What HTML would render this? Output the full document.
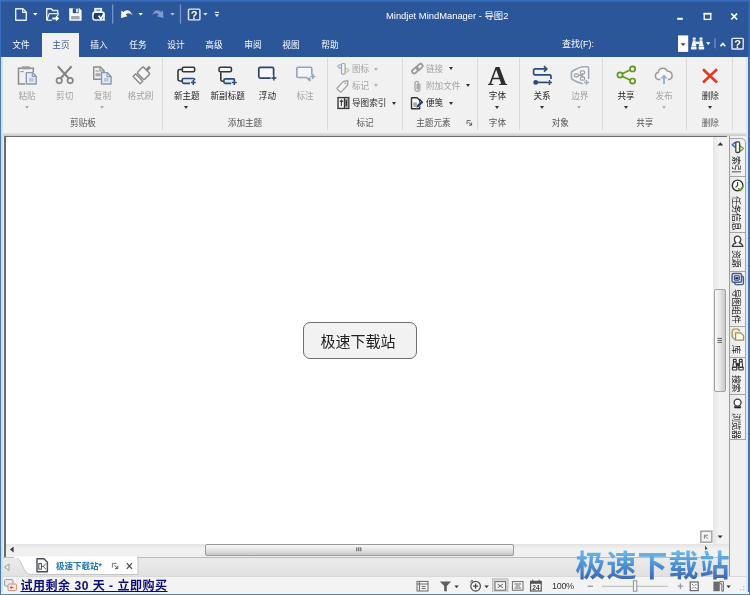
<!DOCTYPE html>
<html>
<head>
<meta charset="utf-8">
<title>Mindjet MindManager - 导图2</title>
<style>
html,body{margin:0;padding:0;}
body{width:750px;height:595px;overflow:hidden;position:relative;background:#f0f0f0;
 font-family:"Liberation Sans","Noto Sans CJK SC",sans-serif;font-size:9px;color:#262626;}
.a{position:absolute;}
svg{position:absolute;overflow:visible;}
/* ---------- title / blue area ---------- */
#blue{left:0;top:0;width:750px;height:57px;background:#2b579a;}
#title{left:386px;top:10px;width:124px;height:12px;line-height:12px;color:#fff;font-size:9.4px;white-space:nowrap;}
.tab{top:39px;height:12px;line-height:12px;width:30px;text-align:center;color:#fff;font-size:8.7px;white-space:nowrap;}
#acttab{left:42px;top:33px;width:37px;height:24px;background:#f1f1f1;}
.qsep{width:1px;background:#7f9bc8;top:5px;height:19px;}
/* ---------- ribbon ---------- */
#ribbon{left:2px;top:57px;width:745px;height:76px;background:#f1f1f1;}
.gsep{top:58px;width:1px;height:72px;background:#d9d9d9;}
.glabel{top:117px;height:12px;line-height:12px;text-align:center;color:#555;font-size:8.6px;white-space:nowrap;}
.blabel{top:90px;height:12px;line-height:12px;text-align:center;font-size:8.6px;white-space:nowrap;width:44px;}
.dis{color:#a3a3a3;}
.slabel{height:12px;line-height:12px;font-size:8.6px;white-space:nowrap;}
.dd{width:0;height:0;border-left:2.5px solid transparent;border-right:2.5px solid transparent;border-top:3px solid #333;}
.dd.g{border-top-color:#b0b0b0;}
.dd.w{border-top-color:#fff;}
/* ---------- canvas ---------- */
#band{left:2px;top:133px;width:745px;height:3px;background:linear-gradient(#e2e2e2,#c9c9c9);}
#canvas{left:4px;top:136px;width:709px;height:408px;background:#fff;border-left:2px solid #6b6b6b;border-top:1px solid #6b6b6b;box-sizing:border-box;}
#node{left:303px;top:322px;width:114px;height:37px;box-sizing:border-box;border:1px solid #6e6e6e;border-radius:7px;background:#f2f2f2;
 text-align:center;line-height:37px;font-size:15px;color:#222;padding-right:4px;}

/* ---------- scrollbars ---------- */
#vscroll{left:713px;top:137px;width:16px;height:407px;background:linear-gradient(90deg,#e6e6e6,#f3f3f3 40%,#f1f1f1);}
#vthumb{left:714px;top:289px;width:11.500px;height:102.500px;box-sizing:border-box;border:1px solid #a2a2a2;border-radius:2px;background:linear-gradient(90deg,#f8f8f8,#e9e9e9 45%,#c8c8c8);}
#hscroll{left:6px;top:544px;width:723px;height:13px;background:linear-gradient(#e4e4e4,#f2f2f2 40%,#efefef);}
#hthumb{left:205px;top:544px;width:308.500px;height:11.500px;box-sizing:border-box;border:1px solid #999;border-radius:2px;background:linear-gradient(#f7f7f7,#e6e6e6 45%,#c9c9c9);}
#vline{left:729px;top:136px;width:1px;height:440px;background:#9a9a9a;}
/* ---------- side panel ---------- */
#side{left:730px;top:136px;width:17px;height:440px;background:#f0f0f0;}
.stab{left:730px;width:15.500px;box-sizing:border-box;border:1px solid #a4a4a4;border-left:none;background:linear-gradient(90deg,#e9e9e9,#f4f4f4);}
.stxt{left:728.500px;width:13px;writing-mode:vertical-rl;text-orientation:sideways;font-size:9px;font-weight:400;line-height:13px;color:#1a1a1a;white-space:nowrap;letter-spacing:-.45px;}
/* ---------- bottom ---------- */
#tabbar{left:2px;top:557px;width:727px;height:19px;background:linear-gradient(#ebebeb,#e1e1e1);border-top:1px solid #bdbdbd;box-sizing:border-box;}
#status{left:2px;top:576px;width:745px;height:17px;background:#f3f3f3;border-top:1px solid #d9d9d9;box-sizing:border-box;}
#trial{left:20.500px;top:578.500px;height:15px;line-height:15px;font-weight:bold;font-size:12px;letter-spacing:.52px;color:#0b0b78;text-decoration:underline;white-space:nowrap;}
#doctab{left:56px;top:560px;height:13px;line-height:13px;font-weight:bold;font-size:8.5px;color:#2473b4;white-space:nowrap;}
#zoomtxt{left:552px;top:580px;height:12px;line-height:12px;font-size:9px;color:#333;letter-spacing:-.3px;}
#wm{left:575.500px;top:546px;height:40px;line-height:40px;font-size:30px;font-weight:bold;white-space:nowrap;letter-spacing:1px;
 font-family:"Liberation Sans","Noto Sans CJK SC",sans-serif;
 background:linear-gradient(#66b3e4 18%,#4a8cd2 52%,#3b63b3 86%);-webkit-background-clip:text;background-clip:text;color:transparent;-webkit-text-fill-color:transparent;}
/* window frame */
.frame{background:#2b579a;}
</style>
</head>
<body>
<div id="root" style="position:absolute;left:0;top:0;width:750px;height:595px;will-change:transform">
<!-- ===== blue title area ===== -->
<div id="blue" class="a"></div>
<div id="acttab" class="a"></div>
<div id="title" class="a">Mindjet MindManager - 导图2</div>

<div class="a tab" style="left:6px">文件</div>
<div class="a tab" style="left:46px;color:#35578f">主页</div>
<div class="a tab" style="left:84px">插入</div>
<div class="a tab" style="left:123px">任务</div>
<div class="a tab" style="left:161px">设计</div>
<div class="a tab" style="left:199px">高级</div>
<div class="a tab" style="left:238px">审阅</div>
<div class="a tab" style="left:276px">视图</div>
<div class="a tab" style="left:315px">帮助</div>


<!-- QAT icons -->
<svg class="a" style="left:0;top:0" width="750" height="57" viewBox="0 0 750 57">
 <!-- window frame hints -->
 <rect x="0" y="0" width="750" height="1.500" fill="#3a6fc0"/>
 <rect x="0" y="0" width="1" height="57" fill="#3a6fc0"/>
 <rect x="748.600" y="0" width="1.400" height="57" fill="#3a6fc0"/>
 <!-- new doc -->
 <path d="M15.7 8.8h7.2l3.4 3.4v8H15.7z" fill="none" stroke="#e3ebf7" stroke-width="1.4" stroke-linejoin="round"/>
 <path d="M22.6 8.8v3.6h3.7" fill="none" stroke="#e3ebf7" stroke-width="1.2"/>
 <path d="M33 13h4.6l-2.3 2.6z" fill="#fff"/>
 <!-- open folder -->
 <path d="M46.7 20.2V8.8h4.6l1.4 1.7h5v3" fill="none" stroke="#e3ebf7" stroke-width="1.4" stroke-linejoin="round"/>
 <path d="M46.8 20.2l2.4-6.6h9.2l-1.2 3" fill="none" stroke="#e3ebf7" stroke-width="1.3" stroke-linejoin="round"/>
 <path d="M46.8 20.3h5" stroke="#e3ebf7" stroke-width="1.3"/>
 <path d="M52.3 17.4h3.6v-1.9l3.4 2.9-3.4 2.9v-1.9h-3.6z" fill="#fff"/>
 <!-- save -->
 <path d="M69.2 8.3h10.2l2.2 2.2v10.3H69.2z" fill="#f4f7fc"/>
 <rect x="72.8" y="8.3" width="5.8" height="4.8" fill="#2b4f8e"/>
 <rect x="76" y="9" width="1.9" height="3.4" fill="#e9eef8"/>
 <rect x="71.2" y="16" width="8.4" height="3.3" fill="#a3a6ab"/>
 <!-- print preview -->
 <rect x="94.800" y="8.400" width="6.800" height="4" fill="#dfe7f3" stroke="#eef3fa" stroke-width="1"/>
 <path d="M96.400 10.200h3.600" stroke="#6f8a86" stroke-width="1.200"/>
 <rect x="93" y="12.200" width="11" height="7.800" rx="2.200" fill="#223f73" stroke="#eef3fa" stroke-width="1.700"/>
 <path d="M94.600 15.400v3" stroke="#17305c" stroke-width="1.600"/>
 <path d="M98.600 15.600l2.200 3.400 3.400-5.600" fill="none" stroke="#fff" stroke-width="1.700"/>
 <rect x="103.400" y="19.200" width="1.500" height="1.500" fill="#eef3fa"/>
 <!-- sep -->
 <rect x="112" y="4.6" width="1.3" height="19" fill="#7593c6"/>
 <!-- undo -->
 <path d="M121 17.900L121.400 10.500L123.300 12.100C125.600 9.300 130.400 8.800 132.500 15.600C130.500 12.900 127.800 12.700 125.700 14.400L127.500 16.200Z" fill="#fff"/>
 <path d="M138.300 13h4.600l-2.300 2.600z" fill="#fff"/>
 <!-- redo (dim) -->
 <path d="M163.400 17.900L163 10.500L161.100 12.100C158.800 9.300 154 8.800 151.900 15.600C153.900 12.900 156.600 12.700 158.700 14.400L156.900 16.200Z" fill="#7d9bcd"/>
 <path d="M170.200 13h4.600l-2.300 2.600z" fill="#b3c4e2"/>
 <!-- sep -->
 <rect x="179.800" y="4.600" width="1.300" height="19" fill="#7593c6"/>
 <!-- help -->
 <rect x="188.500" y="9.100" width="11.400" height="10.800" rx="1" fill="#264b87" stroke="#e3ebf7" stroke-width="1.400"/>
 <text x="194.200" y="18.500" text-anchor="middle" font-family="Liberation Sans, sans-serif" font-weight="bold" font-size="11" fill="#fff">?</text>
 <path d="M203.200 13h4.400l-2.200 2.600z" fill="#dfe7f5"/>
 <!-- customize -->
 <rect x="214.800" y="11.800" width="4.200" height="1.200" fill="#dfe7f5"/>
 <path d="M214.600 14.200h4.600l-2.300 2.800z" fill="#dfe7f5"/>

 <!-- window controls -->
 <rect x="677.200" y="17.800" width="5.600" height="2" fill="#fff"/>
 <rect x="704.200" y="13.800" width="6.600" height="5.600" fill="none" stroke="#fff" stroke-width="1.300"/>
 <rect x="703.600" y="12.800" width="7.800" height="1.600" fill="#fff"/>
 <path d="M731.300 13.500l5.800 6M737.100 13.500l-5.800 6" stroke="#fff" stroke-width="1.700" fill="none"/>

 <!-- search row -->
 <rect x="678" y="35.400" width="10.200" height="16.500" fill="#fff"/>
 <path d="M680.600 43.200h5l-2.500 2.900z" fill="#444"/>
 <!-- binoculars -->
 <g fill="#f1f5fb">
  <rect x="692.600" y="37.400" width="3.200" height="2.400" rx=".8"/>
  <rect x="699.400" y="37.400" width="3.200" height="2.400" rx=".8"/>
  <path d="M692.900 40.200h2.600l.9 6.200h-5z"/>
  <path d="M699.700 40.200h2.600l1.400 6.200h-5z"/>
  <rect x="695.800" y="41.600" width="3.600" height="2.400"/>
  <rect x="691" y="46.800" width="5.600" height="2.800" rx=".8"/>
  <rect x="698.600" y="46.800" width="5.600" height="2.800" rx=".8"/>
 </g>
 <path d="M706 42.300h4.400l-2.200 2.700z" fill="#fff"/>
 <rect x="714.400" y="38.300" width="1.200" height="10" fill="#7593c6"/>
 <path d="M720.500 46.200l2.400-2.700 2.400 2.700" fill="none" stroke="#fff" stroke-width="1.700"/>
 <rect x="732" y="38.400" width="11.200" height="10.600" rx=".8" fill="#264b87" stroke="#e3ebf7" stroke-width="1.400"/>
 <text x="737.600" y="47.800" text-anchor="middle" font-family="Liberation Sans, sans-serif" font-weight="bold" font-size="11" fill="#fff">?</text>
</svg>
<div class="a" style="left:562px;top:38px;height:12px;line-height:12px;color:#fff;font-size:9px;white-space:nowrap">查找(F):</div>

<!-- ===== ribbon ===== -->
<div id="ribbon" class="a"></div>
<div class="a gsep" style="left:162px"></div>
<div class="a gsep" style="left:327px"></div>
<div class="a gsep" style="left:402px"></div>
<div class="a gsep" style="left:477px"></div>
<div class="a gsep" style="left:519px"></div>
<div class="a gsep" style="left:602px"></div>
<div class="a gsep" style="left:686px"></div>
<div class="a gsep" style="left:732px"></div>
<div class="a blabel dis" style="left:5.0px">粘贴</div>
<div class="a dd g" style="left:24.5px;top:105.5px"></div>
<div class="a blabel dis" style="left:42.7px">剪切</div>
<div class="a blabel dis" style="left:80.5px">复制</div>
<div class="a dd g" style="left:100.0px;top:105.5px"></div>
<div class="a blabel dis" style="left:118.5px">格式刷</div>
<div class="a glabel" style="left:53.0px;width:60px">剪贴板</div>
<div class="a blabel" style="left:164.8px">新主题</div>
<div class="a dd" style="left:184.3px;top:105.5px"></div>
<div class="a blabel" style="left:205.7px">新副标题</div>
<div class="a blabel" style="left:245.4px">浮动</div>
<div class="a blabel dis" style="left:283.0px">标注</div>
<div class="a glabel" style="left:215.0px;width:60px">添加主题</div>
<div class="a slabel dis" style="left:352.0px;top:63.0px">图标</div>
<div class="a dd g" style="left:374.3px;top:67.5px"></div>
<div class="a slabel dis" style="left:352.0px;top:79.8px">标记</div>
<div class="a dd g" style="left:374.3px;top:84.3px"></div>
<div class="a slabel" style="left:352.0px;top:97.0px">导图索引</div>
<div class="a dd" style="left:391.5px;top:101.5px"></div>
<div class="a glabel" style="left:335.0px;width:60px">标记</div>
<div class="a slabel dis" style="left:426.0px;top:62.8px">链接</div>
<div class="a dd" style="left:449.0px;top:67.3px"></div>
<div class="a slabel dis" style="left:426.0px;top:79.6px">附加文件</div>
<div class="a dd" style="left:466.0px;top:84.1px"></div>
<div class="a slabel" style="left:426.0px;top:97.0px">便笺</div>
<div class="a dd" style="left:449.0px;top:101.5px"></div>
<div class="a glabel" style="left:403.4px;width:60px">主题元素</div>
<div class="a blabel" style="left:475.4px">字体</div>
<div class="a dd" style="left:494.9px;top:105.5px"></div>
<div class="a glabel" style="left:467.4px;width:60px">字体</div>
<div class="a" style="left:480px;top:59.500px;width:35px;height:32px;line-height:32px;text-align:center;font-family:'Liberation Serif',serif;font-weight:bold;font-size:27px;color:#2e2e2e">A</div>
<div class="a blabel" style="left:520.0px">关系</div>
<div class="a dd" style="left:539.5px;top:105.5px"></div>
<div class="a blabel dis" style="left:557.8px">边界</div>
<div class="a dd g" style="left:577.3px;top:105.5px"></div>
<div class="a glabel" style="left:530.3px;width:60px">对象</div>
<div class="a blabel" style="left:604.0px">共享</div>
<div class="a dd" style="left:623.5px;top:105.5px"></div>
<div class="a blabel dis" style="left:642.0px">发布</div>
<div class="a dd g" style="left:661.5px;top:105.5px"></div>
<div class="a glabel" style="left:614.8px;width:60px">共享</div>
<div class="a blabel" style="left:688.3px">删除</div>
<div class="a dd" style="left:707.8px;top:105.5px"></div>
<div class="a glabel" style="left:680.3px;width:60px">删除</div>

<svg class="a" style="left:0;top:0" width="750" height="136" viewBox="0 0 750 136">
 <!-- paste -->
 <g>
  <path d="M25 84H18.500V68.300H33.300V72" fill="none" stroke="#8c8c8c" stroke-width="1.500"/>
  <rect x="21.800" y="66.300" width="8" height="3" fill="#9a9a9a"/>
  <rect x="20.300" y="71" width="3.400" height="1.200" fill="#9a9a9a"/>
  <path d="M26.300 72.600h6.300l3.600 3.600v7.800H26.300z" fill="#e4ecf8" stroke="#8b98b0" stroke-width="1.400" stroke-linejoin="round"/>
  <path d="M32.300 72.800v3.600h3.700" fill="none" stroke="#8b98b0" stroke-width="1.100"/>
  <rect x="29" y="78" width="4.600" height="3.600" fill="#b9c7de"/>
 </g>
 <!-- cut -->
 <g fill="none" stroke="#858585" stroke-width="1.700">
  <path d="M57.800 66.200L68.600 78.200M71.600 66.200L60.800 78.200" stroke-width="2.100"/>
  <circle cx="59.200" cy="80.600" r="2.700"/>
  <circle cx="70.200" cy="80.600" r="2.700"/>
 </g>
 <!-- copy -->
 <g>
  <path d="M93.700 67h6.600l3.800 3.800v8.400H93.700z" fill="#ededed" stroke="#8c8c8c" stroke-width="1.400" stroke-linejoin="round"/>
  <path d="M100 67.200v3.800h3.900" fill="none" stroke="#8c8c8c" stroke-width="1.100"/>
  <rect x="95.600" y="70.400" width="3" height="1.200" fill="#999"/>
  <rect x="95.600" y="73.200" width="5" height="3" fill="#a9a9a9"/>
  <path d="M101.500 72.600h5.800l3.800 3.800v7.600H101.500z" fill="#e4ecf8" stroke="#8b98b0" stroke-width="1.400" stroke-linejoin="round"/>
  <path d="M107 72.800v3.800h3.900" fill="none" stroke="#8b98b0" stroke-width="1.100"/>
  <rect x="104" y="78" width="4.600" height="3.600" fill="#b9c7de"/>
 </g>
 <!-- format painter -->
 <g transform="translate(1.300 -0.500) rotate(45 141 75)">
  <rect x="139.600" y="64.200" width="2.800" height="5" fill="#858585"/>
  <rect x="136" y="69" width="10" height="8.600" rx="1.200" fill="#f6f6f6" stroke="#8a8a8a" stroke-width="1.500"/>
  <path d="M136 79.400h10v3.600h-10z" fill="#f6f6f6" stroke="#8a8a8a" stroke-width="1.400"/>
 </g>
 <!-- new topic -->
 <g fill="none">
  <path d="M182 69.500h-2.200a1.800 1.800 0 0 0-1.800 1.800v7.900a1.800 1.800 0 0 0 1.800 1.800h2.200" stroke="#363636" stroke-width="1.600"/>
  <rect x="182.300" y="67.300" width="12.300" height="4.400" rx="1.300" fill="#f7f7f7" stroke="#363636" stroke-width="1.600"/>
  <path d="M194.600 80.300v-.500a1.300 1.300 0 0 0-1.300-1.300h-9.700a1.300 1.300 0 0 0-1.300 1.300v2.300a1.300 1.300 0 0 0 1.300 1.300h6.400" fill="#dfeaf8" stroke="#2b4a80" stroke-width="1.600"/>
  <path d="M190.900 82.500h4.800M193.300 80.100v4.800" stroke="#2b4a80" stroke-width="1.500"/>
 </g>
 <!-- new subtopic -->
 <g fill="none">
  <rect x="219.100" y="67.300" width="12.300" height="4.400" rx="1.300" fill="#f7f7f7" stroke="#363636" stroke-width="1.600"/>
  <path d="M220.800 72.200v7.200a1.800 1.800 0 0 0 1.800 1.800h1.400" stroke="#363636" stroke-width="1.600"/>
  <path d="M234.600 80.400v-.200a1.300 1.300 0 0 0-1.300-1.300h-8.100a1.300 1.300 0 0 0-1.300 1.300v1.900a1.300 1.300 0 0 0 1.300 1.300h6" fill="#dfeaf8" stroke="#2b4a80" stroke-width="1.600"/>
  <path d="M231.900 82.500h4.800M234.300 80.100v4.800" stroke="#2b4a80" stroke-width="1.500"/>
 </g>
 <!-- floating -->
 <g fill="none">
  <path d="M273.600 75.600V68.800a1.500 1.500 0 0 0-1.500-1.500h-11.800a1.500 1.500 0 0 0-1.500 1.500v7.800a1.500 1.500 0 0 0 1.500 1.500h10.300" fill="#f5f7fb" stroke="#2f436e" stroke-width="1.700"/>
  <path d="M271.400 78h5M273.900 75.500v5" stroke="#2f436e" stroke-width="1.500"/>
 </g>
 <!-- callout -->
 <g fill="none">
  <path d="M311.800 74.800V68.600a1.300 1.300 0 0 0-1.300-1.300h-12.400a1.300 1.300 0 0 0-1.300 1.300v7.600a1.300 1.300 0 0 0 1.300 1.300h8.400l3.400 3.200-.4-3.200" fill="#f3f5f9" stroke="#93a2bd" stroke-width="1.600" stroke-linejoin="round"/>
  <path d="M310.300 76.600h5M312.800 74.100v5" stroke="#93a2bd" stroke-width="1.500"/>
 </g>
 <!-- icon marker (disabled) -->
 <g fill="#f6f6f6" stroke-width="1.200">
  <path d="M337.700 66.500l1.900-1.700h2.400v3.400h-2.400z" stroke="#a4b2cf" fill="#e6ecf8" stroke-linejoin="round"/>
  <path d="M349 70.300l-1.900 1.700h-2.400v-3.400h2.400z" stroke="#b3cc9a" fill="#eef6e3" stroke-linejoin="round"/>
  <rect x="341.500" y="63.500" width="3.600" height="10.600" rx="1.200" stroke="#a0a4a0"/>
 </g>
 <!-- tag (disabled) -->
 <g transform="translate(0 -0.600) rotate(-47 343.500 86)">
  <path d="M337.600 83.200h8.800l3.400 2.800-3.400 2.800h-8.800a1 1 0 0 1-1-1v-3.600a1 1 0 0 1 1-1z" fill="#f6f6f6" stroke="#a3a3a3" stroke-width="1.400" stroke-linejoin="round"/>
  <circle cx="346.200" cy="86" r=".9" fill="#a3a3a3"/>
 </g>
 <!-- map index -->
 <g>
  <rect x="338" y="97.600" width="10.800" height="10.800" fill="#fbfbfb" stroke="#3a3a3a" stroke-width="1.400"/>
  <rect x="344.600" y="98.400" width="3.600" height="9.400" fill="#9a9a9a"/>
  <path d="M341.400 100.400v5.600M339.800 101.800l1.600-1.800 1.600 1.800" fill="none" stroke="#3a3a3a" stroke-width="1.100"/>
  <path d="M344.400 98v10" stroke="#3a3a3a" stroke-width="1.200"/>
  <rect x="345.600" y="100.200" width="1.400" height="5.800" fill="#3a3a3a"/>
 </g>
 <!-- link (disabled) -->
 <g transform="rotate(-40 417.200 68.800)" fill="none" stroke="#9c9c9c" stroke-width="1.800">
  <rect x="411.200" y="66.700" width="7" height="4.200" rx="2.100"/>
  <rect x="416.600" y="66.700" width="7" height="4.200" rx="2.100"/>
 </g>
 <!-- paperclip (disabled) -->
 <g fill="none" stroke="#a8a8a8" stroke-width="1.300">
  <path d="M419.800 83.600v5.400a2.400 2.400 0 0 1-4.800 0v-6a1.700 1.700 0 0 1 3.400 0v5.600a.6.600 0 0 1-1.200 0v-4.800"/>
 </g>
 <!-- notes -->
 <g>
  <path d="M411.500 97.700h5.600l2.600 2.600v8.400h-8.200z" fill="#fbfbfb" stroke="#333" stroke-width="1.400" stroke-linejoin="round"/>
  <rect x="413.300" y="102.400" width="3.600" height="4.400" fill="#a9a9a9"/>
  <path d="M416 108l.6-2.600 4.300-4.500 2 1.900-4.300 4.500z" fill="#24427f" stroke="#f4f4f4" stroke-width=".5"/>
  <path d="M419.600 99.200l3.300 3.600" stroke="#222" stroke-width="1.200"/>
 </g>
 <!-- launcher -->
 <path d="M470.600 120.600h-3.600v3.600" fill="none" stroke="#666" stroke-width="1"/>
 <path d="M468.600 122.200l2.600 2.600M471.600 122.600v2.600h-2.600" fill="none" stroke="#555" stroke-width="1"/>
 <!-- relationship -->
 <g fill="none" stroke="#2c4a80" stroke-width="1.700">
  <path d="M545.600 68.900h-10.600a1.400 1.400 0 0 0-1.400 1.400v3.200a1.400 1.400 0 0 0 1.400 1.400h14.600a1.400 1.400 0 0 1 1.400 1.400v2.800"/>
  <path d="M544 66.200l2.800 2.700-2.800 2.700"/>
  <path d="M536 82.400h11"/>
  <path d="M547 82.400h5M549.500 79.900v5" stroke-width="1.500"/>
  <circle cx="535.700" cy="82.400" r="1.600" fill="#2c4a80"/>
 </g>
 <!-- boundary (disabled) -->
 <g fill="none">
  <path d="M588.600 79V68.200a1.400 1.400 0 0 0-1.400-1.400h-3.200c-3 0-8.200 2.400-11.600 4.400a2 2 0 0 0-1 1.700v4.900a2 2 0 0 0 1 1.700c3 1.800 7.400 3.700 10.600 4.200" stroke="#9ea9bd" stroke-width="1.600" fill="#f3f5f9"/>
  <path d="M582.300 72.400v6.300M578.600 75.300h3.200" stroke="#a2a2a2" stroke-width="1.600"/>
  <g fill="#fafafa" stroke="#a2a2a2" stroke-width="1.300">
   <rect x="574.400" y="73.800" width="4" height="3" rx="1.200"/>
   <rect x="580.400" y="70.800" width="4.200" height="3.200" rx="1.200"/>
   <rect x="580.400" y="77" width="4.200" height="3.200" rx="1.200"/>
  </g>
  <path d="M584.100 82.400h4.800M586.500 80v4.800" stroke="#9ea9c2" stroke-width="1.500"/>
 </g>
 <!-- share -->
 <g fill="none" stroke="#5d9b20" stroke-width="1.700">
  <path d="M622.200 73.800l7.800-3.800M622.200 76.200l7.800 3.800"/>
  <circle cx="620" cy="75" r="2.600" fill="#f6f9f0"/>
  <circle cx="632.600" cy="68.900" r="2.600" fill="#f6f9f0"/>
  <circle cx="632.600" cy="81.100" r="2.600" fill="#f6f9f0"/>
 </g>
 <!-- publish (disabled) -->
 <g fill="none">
  <path d="M660.400 79.600h-1.600a3.600 3.600 0 0 1-.6-7.100 4.800 4.800 0 0 1 9.200-1.300 4.300 4.300 0 0 1 1.600 8.400h-1.200" stroke="#9c9c9c" stroke-width="1.500" fill="#f6f6f6"/>
  <path d="M664 84v-7" stroke="#8fb0da" stroke-width="1.900"/>
  <path d="M660.400 78.600l3.600-4 3.600 4z" fill="#8fb0da"/>
 </g>
 <!-- delete -->
 <path d="M703 69.200l14 13.400M717 69.200l-14 13.400" stroke="#e03d20" stroke-width="2.700" fill="none"/>
</svg>


<!-- ===== canvas ===== -->
<div id="band" class="a"></div>
<div id="canvas" class="a"></div>
<div id="node" class="a">极速下载站</div>


<!-- ===== scrollbars ===== -->
<div id="vscroll" class="a"></div>
<div id="vthumb" class="a"></div>
<div class="a" style="left:713px;top:136px;width:14px;height:1px;background:#6b6b6b"></div>
<div id="hscroll" class="a"></div>
<div id="hthumb" class="a"></div>
<div class="a" style="left:4px;top:544px;width:2px;height:13px;background:#6b6b6b"></div>
<div id="side" class="a"></div>
<div id="vline" class="a"></div>

<!-- side tabs -->
<div class="a stab" style="top:138px;height:39px;border-top-right-radius:5px"></div>
<div class="a stab" style="top:176px;height:57px"></div>
<div class="a stab" style="top:232px;height:40px"></div>
<div class="a stab" style="top:271px;height:56px"></div>
<div class="a stab" style="top:326px;height:32px"></div>
<div class="a stab" style="top:357px;height:38px"></div>
<div class="a stab" style="top:394px;height:46px"></div>
<div class="a stxt" style="top:156px">索引</div>
<div class="a stxt" style="top:195.500px">任务信息</div>
<div class="a stxt" style="top:250px">资源</div>
<div class="a stxt" style="top:289px">导图组件</div>
<div class="a stxt" style="top:345px">库</div>
<div class="a stxt" style="top:375px">搜索</div>
<div class="a stxt" style="top:412.500px">浏览器</div>

<svg class="a" style="left:725px;top:136px" width="25" height="310" viewBox="725 136 25 310">
 <!-- index -->
 <path d="M732.200 144.800l2.800-2.400h2.200v4.800h-2.200z" fill="#cfdcf5" stroke="#3f5fae" stroke-width="1.300" stroke-linejoin="round"/>
 <path d="M743.500 148.600l-2.800 2.400h-2.200v-4.800h2.200z" fill="#dcefc2" stroke="#6aa324" stroke-width="1.300" stroke-linejoin="round"/>
 <rect x="735.800" y="141.900" width="3.800" height="10.600" rx="1.200" fill="#fbfbfb" stroke="#36463a" stroke-width="1.300"/>
 <!-- clock -->
 <circle cx="737.600" cy="185.400" r="5.300" fill="#fcfcfc" stroke="#333" stroke-width="1.400"/>
 <path d="M737.600 182v3.600l-2 1.600" fill="none" stroke="#333" stroke-width="1.100"/>
 <path d="M738.400 188.400l1.800 2 2.800-4" fill="none" stroke="#5ba11c" stroke-width="1.700"/>
 <!-- person -->
 <path d="M732.400 246.400c0-2 2-3 3.600-3.600-1.200-1-1.600-2-1.600-3.400a3.200 3.200 0 0 1 6.400 0c0 1.400-.4 2.400-1.600 3.400 1.600.6 3.600 1.600 3.600 3.600z" fill="#fcfcfc" stroke="#3c3c3c" stroke-width="1.300" stroke-linejoin="round"/>
 <!-- map parts -->
 <rect x="734.800" y="276.200" width="8.600" height="8.400" rx="1.400" fill="#eef2fa" stroke="#44588a" stroke-width="1.400"/>
 <rect x="732.100" y="273.500" width="9.400" height="8.800" rx="1.400" fill="#eef2fa" stroke="#44588a" stroke-width="1.400"/>
 <rect x="734.300" y="275.700" width="5" height="4.400" rx=".6" fill="#d5deef" stroke="#344672" stroke-width="1.100"/>
 <rect x="735.300" y="277.200" width="3" height="1.800" fill="#1c2745"/>
 <!-- library -->
 <path d="M732.200 337v-6.400l1.600-1.600h4l2 2" fill="#f3ead0" stroke="#a48c5e" stroke-width="1.200" stroke-linejoin="round"/>
 <path d="M735.600 340.200v-7.400h5l3 2.800v4.600z" fill="#fbf7e6" stroke="#a48c5e" stroke-width="1.200" stroke-linejoin="round"/>
 <path d="M732.200 337l3.400 3.200" stroke="#a48c5e" stroke-width="1.100"/>
 <!-- binoculars -->
 <g fill="#fcfcfc" stroke="#333" stroke-width="1.100">
  <path d="M733.600 361.800h2.400l.8 5.600h-4z"/>
  <path d="M739.600 361.800h2.400l.8 5.600h-4z"/>
  <rect x="732.400" y="367.400" width="4.400" height="2.600" rx=".6"/>
  <rect x="738.800" y="367.400" width="4.400" height="2.600" rx=".6"/>
  <rect x="733.400" y="359.400" width="2.800" height="2.400" rx=".6"/>
  <rect x="739.400" y="359.400" width="2.800" height="2.400" rx=".6"/>
  <path d="M736.400 363.600h2.800v2.200h-2.800z" fill="#333"/>
 </g>
 <!-- browser -->
 <circle cx="737.600" cy="402.600" r="3.500" fill="#fcfcfc" stroke="#3a3a3a" stroke-width="1.300"/>
 <path d="M734.400 407.400h6.400" stroke="#222" stroke-width="1.800"/>
 <path d="M735.400 405.800l-1 1.400M739.800 405.800l1 1.400" stroke="#222" stroke-width="1"/>
</svg>


<!-- ===== bottom tab bar / status ===== -->
<div id="tabbar" class="a"></div>
<div id="status" class="a"></div>
<svg class="a" style="left:0;top:540px" width="750" height="55" viewBox="0 540 750 55">
 <!-- document tab -->
 <path d="M14 557.500c5 0 6 3 8.500 8.500s4.500 8.500 9 8.500H138v-15.500a1.500 1.500 0 0 0-1.500-1.500z" fill="#fff" stroke="#c4c4c4" stroke-width="1"/>
 <rect x="14" y="556.400" width="123" height="1.800" fill="#fff"/>
 <!-- nav arrows -->
 <path d="M9 564l-4.400 3.200 4.400 3.200z" fill="#f4f4f4" stroke="#9a9a9a" stroke-width="1"/>
 <path d="M13.600 546.600v6l-3.600-3z" fill="#3b3b3b"/>
 <!-- map doc icon -->
 <path d="M37 558.800h7l3.400 3.400v9.600H37z" fill="#fff" stroke="#444c5e" stroke-width="1.400" stroke-linejoin="round"/>
 <rect x="38.800" y="563.600" width="2.600" height="5.600" fill="none" stroke="#444c5e" stroke-width="1"/>
 <path d="M41.600 566.400h1.800M46 563.400l-2.600 3 2.600 3" fill="none" stroke="#444c5e" stroke-width="1"/>
 <!-- restore + close in tab -->
 <path d="M116.600 563.400h-4.200v4.200" fill="none" stroke="#777" stroke-width="1"/>
 <path d="M114.600 565.400l2.800 2.800M117.800 565.800v2.800H115" fill="none" stroke="#555" stroke-width="1"/>
 <path d="M126.800 563.200l5.200 5.600M132 563.200l-5.200 5.600" stroke="#444" stroke-width="1.200" fill="none"/>
 <!-- trial icon -->
 <rect x="4.600" y="579.600" width="8.400" height="6.600" rx="1" fill="#e6edf7" stroke="#8d99b4" stroke-width="1"/>
 <rect x="8" y="584" width="8.400" height="6.600" rx="1" fill="#fbe9e2" stroke="#d98b73" stroke-width="1"/>
 <path d="M13.600 587.400h-3.400m1.400-1.400l-1.400 1.400 1.400 1.400" fill="none" stroke="#c8502d" stroke-width="1"/>
 <!-- canvas corner buttons -->
 <rect x="700.800" y="531.200" width="11" height="11" fill="#f2f2f2" stroke="#a8a8a8" stroke-width="1.600"/>
 <path d="M704.400 538.800v-3.600h3.600M704.800 535.600l3.200 3.200" fill="none" stroke="#777" stroke-width=".9"/>
 <path d="M717.600 535.400h5l-2.500 2.800z" fill="#333"/>
 <path d="M705 545.600l2.600 3.400-1.400.2-.8 1.200z" fill="#2a2a2a"/>
 <!-- status icons -->
 <g fill="none" stroke="#6a6a6a" stroke-width="1">
  <rect x="417" y="581.400" width="11" height="9.600" fill="#f8f8f8"/>
  <path d="M419.400 581.400v9.600M417 584h11M421.600 586.400h4M421.600 588.600h4"/>
 </g>
 <path d="M440 581.400h11l-4.200 4.600v5.200h-2.600v-5.200z" fill="#5d5d5d"/>
 <path d="M454.400 585.600h4.400l-2.200 2.500z" fill="#333"/>
 <circle cx="475.600" cy="586.200" r="4.800" fill="#fafafa" stroke="#555" stroke-width="1.300"/>
 <path d="M473 586.200h5.200M475.600 583.600v5.200" stroke="#444" stroke-width="1.300"/>
 <path d="M470.400 582.400l1.600-2.200 1.600 2" fill="none" stroke="#555" stroke-width="1"/>
 <path d="M484.400 585.600h4.400l-2.200 2.500z" fill="#333"/>
 <rect x="492.500" y="578.800" width="15.500" height="13.600" fill="#d6d6d6" stroke="#bdbdbd" stroke-width="1"/>
 <g fill="none" stroke="#6a6a6a" stroke-width="1">
  <rect x="495" y="581.600" width="10.600" height="8.600" fill="#f4f4f4"/>
  <path d="M497.600 584l5.400 3.800M503 584l-5.400 3.800"/>
  <rect x="512.400" y="581.600" width="10.600" height="8.600" fill="#f8f8f8"/>
  <path d="M514.400 584h6.600M515.600 586h4.200M514.400 588h6.600"/>
 </g>
 <rect x="530.600" y="581.400" width="10.600" height="9.600" fill="#fafafa" stroke="#555" stroke-width="1.200"/>
 <rect x="530.600" y="581.400" width="10.600" height="2.400" fill="#555"/>
 <path d="M532.600 579.800v2M539.200 579.800v2" stroke="#555" stroke-width="1.200"/>
 <text x="535.900" y="590" text-anchor="middle" font-family="Liberation Sans, sans-serif" font-weight="bold" font-size="6.500" fill="#444">24</text>
 <!-- zoom slider -->
 <rect x="587.600" y="585.600" width="5.400" height="1.300" fill="#9a9a9a"/>
 <rect x="601.800" y="585.800" width="66" height="1" fill="#b9b9b9"/>
 <rect x="633.400" y="580.800" width="3.400" height="10.400" fill="#f4f4f4" stroke="#8f8f8f" stroke-width="1"/>
 <path d="M677.600 586.200h5.600M680.400 583.400v5.600" stroke="#9a9a9a" stroke-width="1.300"/>
 <rect x="690.200" y="582" width="8" height="8.600" fill="#f8f8f8" stroke="#666" stroke-width="1.200"/>
 <path d="M692 584l1.600 1.600M696.400 584l-1.600 1.600M692 588.600l1.600-1.600M696.400 588.600l-1.600-1.600" stroke="#666" stroke-width="1"/>
 <rect x="713.400" y="581.600" width="6.400" height="9.600" fill="#6b6b6b"/>
 <path d="M719.800 581.600h3.600v9.600h-1.600v-7.400h-2z" fill="#f8f8f8" stroke="#6b6b6b" stroke-width="1"/>
 <path d="M726.400 585.400h4.400l-2.200 2.500z" fill="#333"/>
 <g fill="#c4c4c4"><rect x="743" y="586" width="1.400" height="1.400"/><rect x="743" y="589" width="1.400" height="1.400"/><rect x="740" y="589" width="1.400" height="1.400"/></g>
 <!-- v scroll arrow up & grip -->
</svg>
<div id="doctab" class="a">极速下载站*</div>
<div id="trial" class="a">试用剩余 30 天 - 立即购买</div>
<div id="zoomtxt" class="a">100%</div>
<div id="wm" class="a">极速下载站</div>

<!-- scroll arrows / grips -->
<svg class="a" style="left:0;top:136px" width="750" height="424" viewBox="0 136 750 424">
 <path d="M717.600 145.600l2.800-3.400 2.800 3.400z" fill="#333"/>
 <path d="M717.400 338.400h4.600M717.400 340.400h4.600M717.400 342.400h4.600" stroke="#666" stroke-width="1"/>
 <path d="M356.800 547.300v4M358.800 547.300v4M360.800 547.300v4" stroke="#555" stroke-width="1"/>
</svg>

<!-- window frame -->
<div class="a" style="left:0;top:57px;width:1px;height:538px;background:#5077a8"></div>
<div class="a" style="left:1px;top:57px;width:2px;height:536px;background:#cfe0f3"></div>
<div class="a" style="left:748.400px;top:57px;width:1.600px;height:538px;background:#4672b4"></div>
<div class="a" style="left:746.200px;top:57px;width:2.200px;height:536px;background:#d6e7f8"></div>
<div class="a" style="left:1px;top:592px;width:748px;height:1.500px;background:#eaf6fd"></div>
<div class="a" style="left:0;top:593.500px;width:750px;height:1.500px;background:#5f82ad"></div>
</div>
</body>
</html>
